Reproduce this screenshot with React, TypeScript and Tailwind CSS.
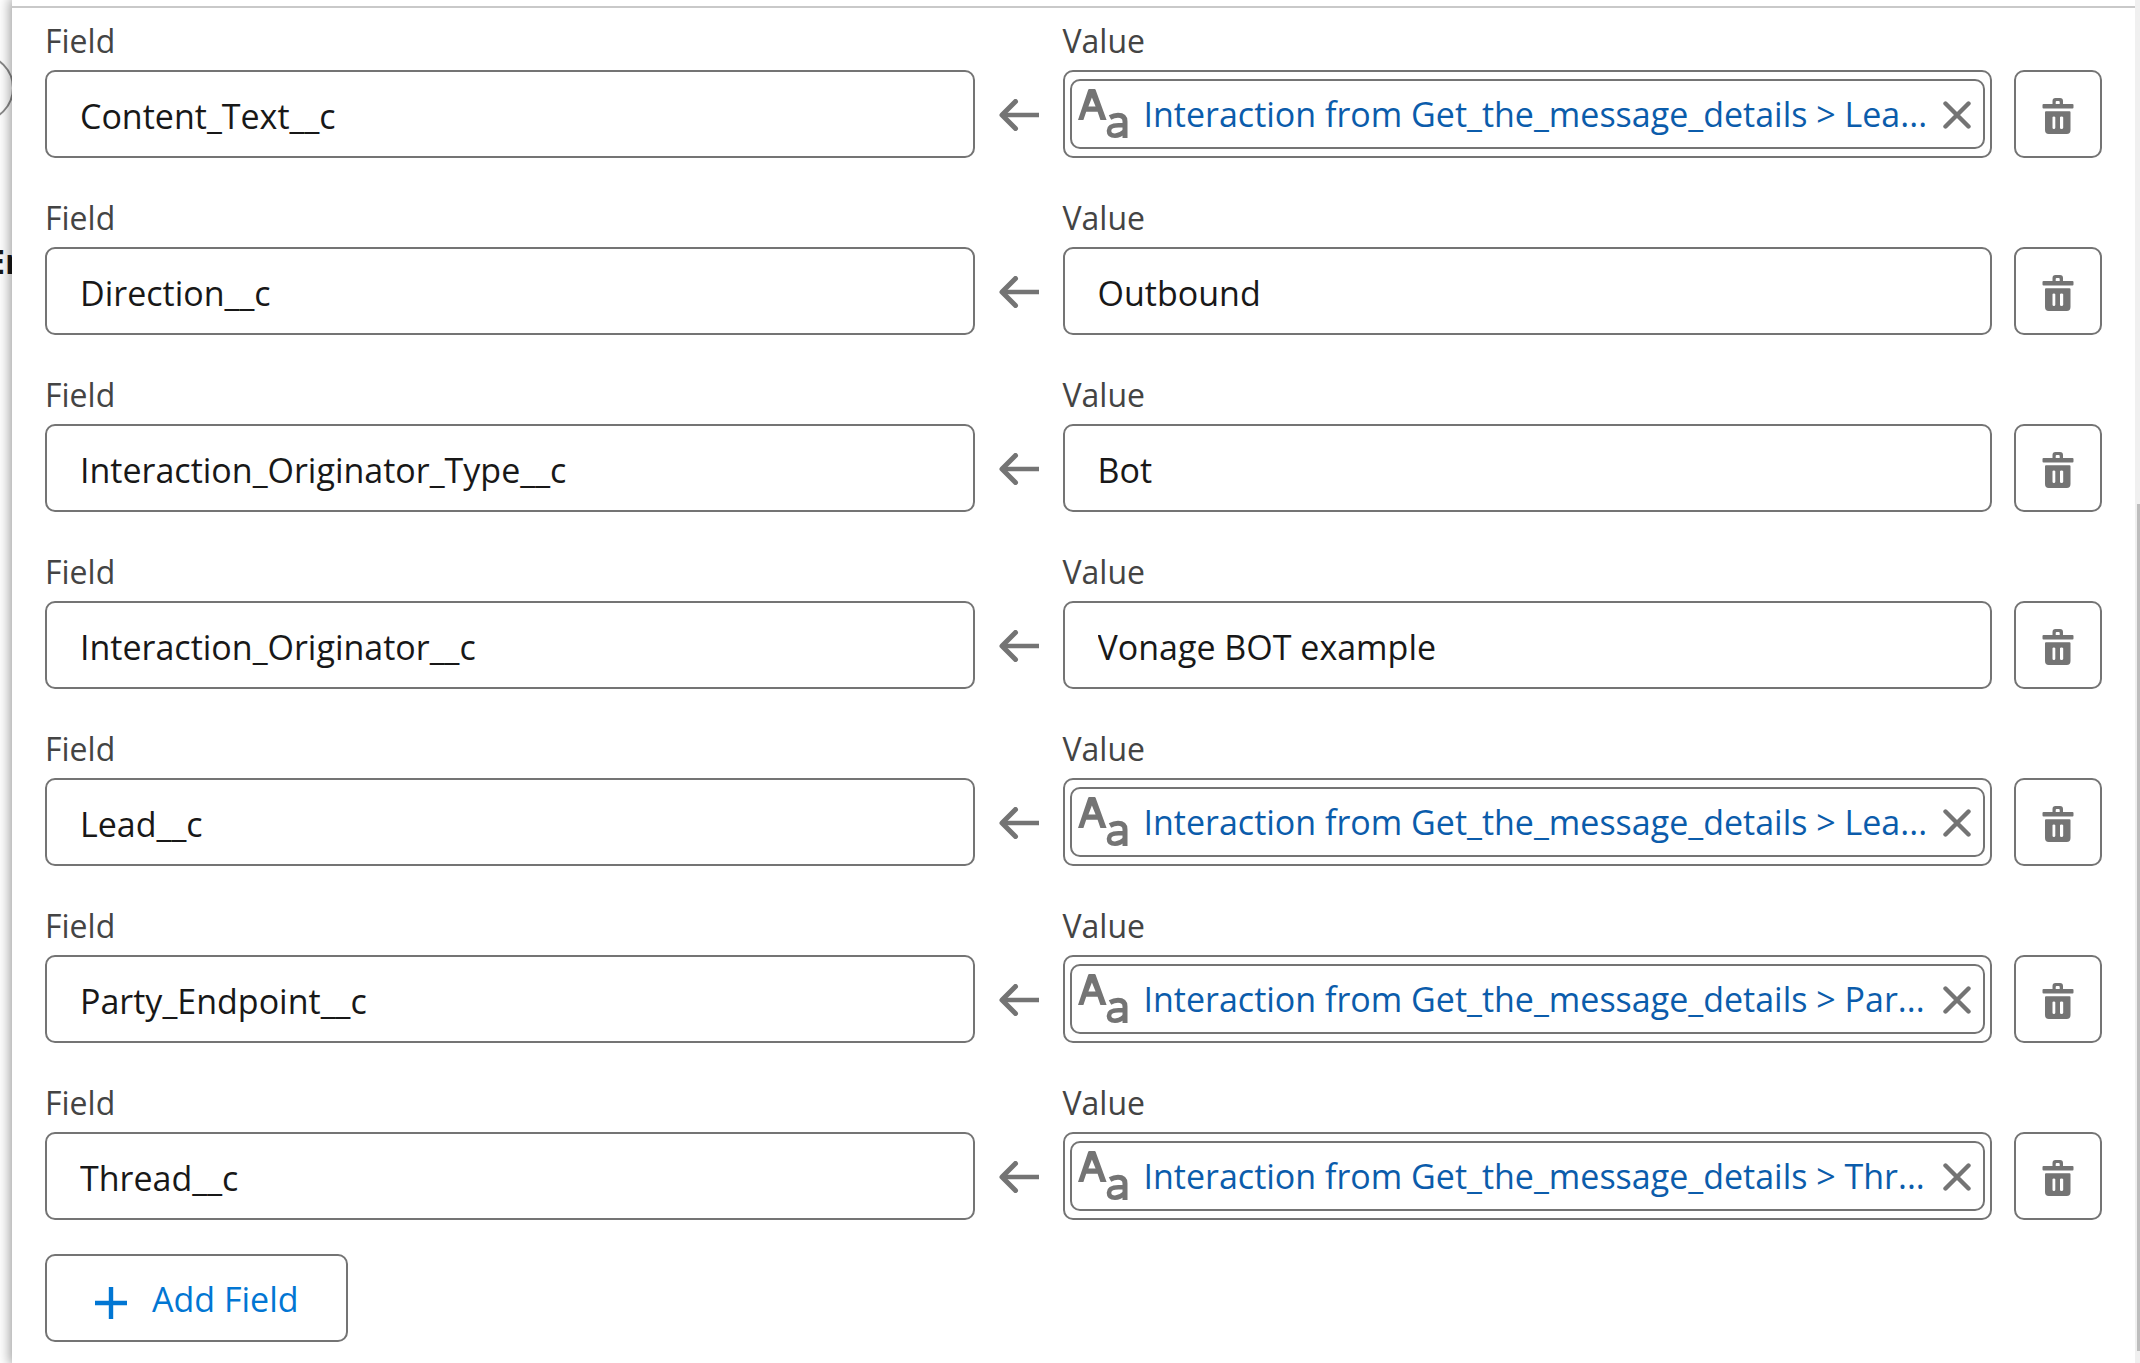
import React, { useId, useState } from "react";

type Row = { field: string; value: string; resource?: boolean };

const PREFIX = "Interaction from Get_the_message_details > ";

const initialRows: Row[] = [
  { field: "Content_Text__c", value: PREFIX + "Lea...", resource: true },
  { field: "Direction__c", value: "Outbound" },
  { field: "Interaction_Originator_Type__c", value: "Bot" },
  { field: "Interaction_Originator__c", value: "Vonage BOT example" },
  { field: "Lead__c", value: PREFIX + "Lea...", resource: true },
  { field: "Party_Endpoint__c", value: PREFIX + "Par...", resource: true },
  { field: "Thread__c", value: PREFIX + "Thr...", resource: true },
];

function ArrowLeft() {
  return (
    <svg width="40" height="32" viewBox="0 0 40 32" fill="none" stroke="#747474" aria-hidden="true">
      <path d="M4 16H40" strokeWidth="4.6" />
      <path d="M16.5 2.5L3 16L16.5 29.5" strokeWidth="5" strokeLinecap="round" strokeLinejoin="round" />
    </svg>
  );
}

function TextIcon() {
  return (
    <svg className="shrink-0" width="50" height="50" viewBox="0 0 50 50" fill="none" stroke="#747474" aria-hidden="true">
      <path
        fill="#747474"
        stroke="none"
        fillRule="evenodd"
        d="M11.2 0H16.6Q17.3 0 17.6 .8L28.6 31H22.4L19.6 22.8H8.2L5.4 31H0L10.2 .8Q10.5 0 11.2 0ZM13.9 8.6L10.4 17.4H17.6Z"
      />
      <path d="M32 28.5Q36 26.3 40 26.3Q47 26.3 47 32.5V49" strokeWidth="5" />
      <path d="M46.5 36.2H40.5Q31 36.2 31 41.7Q31 46.7 37 46.7Q42 46.7 46.5 42.5" strokeWidth="4.6" />
    </svg>
  );
}

function CloseIcon() {
  return (
    <svg width="28" height="28" viewBox="0 0 28 28" fill="none" stroke="#747474" strokeWidth="4.4" strokeLinecap="round" aria-hidden="true">
      <path d="M2.5 2.5L25.5 25.5M25.5 2.5L2.5 25.5" />
    </svg>
  );
}

function TrashIcon() {
  return (
    <svg width="32" height="36" viewBox="0 0 32 36" fill="#747474" aria-hidden="true">
      <path d="M10.5 7V3Q10.5 0 13.5 0H18Q21 0 21 3V7H17.7V4Q17.7 3 16.7 3H14.7Q13.7 3 13.7 4V7Z" />
      <rect x="0.5" y="6" width="31" height="4.4" rx="1" />
      <path
        fillRule="evenodd"
        d="M4 13.3H27.5Q28.5 13.3 28.5 14.3V32Q28.5 36 24.7 36H6.8Q3 36 3 32V14.3Q3 13.3 4 13.3ZM10.5 19.2V29.8Q10.5 31 11.9 31Q13.3 31 13.3 29.8V19.2Q13.3 18.4 11.9 18.4Q10.5 18.4 10.5 19.2ZM18 19.2V29.8Q18 31 19.4 31Q21.2 31 21.2 29.8V19.2Q21.2 18.4 19.4 18.4Q18 18.4 18 19.2Z"
      />
    </svg>
  );
}

function PlusIcon() {
  return (
    <svg width="34" height="34" viewBox="0 0 34 34" fill="none" stroke="#0176d3" strokeWidth="4.4" aria-hidden="true">
      <path d="M17 1V33M1 17H33" />
    </svg>
  );
}

const labelClass = "block text-[32px] leading-[42px] text-[#444444]";
const inputClass =
  "h-[88px] w-full rounded-[10px] border-2 border-[#747474] bg-white px-[33px] pt-1 text-[34px] text-[#181818] outline-none";

function AssignmentRow({ row, onClear, onDelete }: { row: Row; onClear: () => void; onDelete: () => void }) {
  const id = useId();
  return (
    <div className="flex items-end">
      <div className="flex min-w-0 flex-1 flex-col gap-2">
        <label htmlFor={id + "f"} className={labelClass}>Field</label>
        <input id={id + "f"} type="text" defaultValue={row.field} className={inputClass} />
      </div>
      <div className="flex h-[88px] w-[88px] shrink-0 items-center justify-center pt-[2px]">
        <ArrowLeft />
      </div>
      <div className="flex min-w-0 flex-1 flex-col gap-2">
        <label htmlFor={id + "v"} className={labelClass}>Value</label>
        {row.resource ? (
          <div className="flex h-[88px] items-center rounded-[10px] border-2 border-[#747474] px-[5px]">
            <div className="flex h-[70px] w-full items-center rounded-[10px] border-2 border-[#747474] pr-3 pl-[6px]">
              <TextIcon />
              <button id={id + "v"} type="button" className="ml-4 min-w-0 flex-1 truncate text-left text-[34px] leading-[50px] text-[#0b5cab]">
                {row.value}
              </button>
              <button type="button" aria-label="Clear value" onClick={onClear} className="shrink-0 pt-[2px]">
                <CloseIcon />
              </button>
            </div>
          </div>
        ) : (
          <input id={id + "v"} type="text" defaultValue={row.value} className={inputClass} />
        )}
      </div>
      <button
        type="button"
        aria-label="Delete field"
        onClick={onDelete}
        className="ml-[22px] flex h-[88px] w-[88px] shrink-0 items-center justify-center rounded-[10px] border-2 border-[#747474] pt-1"
      >
        <TrashIcon />
      </button>
    </div>
  );
}

export default function App() {
  const [rows, setRows] = useState(initialRows);
  return (
    <div className="flex min-h-screen overflow-hidden bg-white font-['Open_Sans','Noto_Sans',sans-serif]">
      <div className="relative w-3 shrink-0 overflow-hidden">
        <div className="absolute top-[54px] -left-[54px] h-[68px] w-[68px] rounded-full border-2 border-[#8a8a8a]" />
        <span className="absolute top-[238px] -left-[14px] text-[34px] leading-[46px] font-bold text-[#181818]">En</span>
      </div>
      <main className="relative min-w-0 flex-1 bg-white shadow-[0_0_12px_2px_rgba(0,0,0,0.4)]">
        <div className="mt-[6px] border-t-2 border-[#c9c9c9] px-[33px] pt-3">
          <div className="flex flex-col gap-[39px]">
            {rows.map((row, i) => (
              <AssignmentRow
                key={row.field}
                row={row}
                onClear={() => setRows(rows.map((r, j) => (j === i ? { field: r.field, value: "" } : r)))}
                onDelete={() => setRows(rows.filter((_, j) => j !== i))}
              />
            ))}
          </div>
          <button
            type="button"
            onClick={() => setRows([...rows, { field: "", value: "" }])}
            className="mt-[34px] flex h-[88px] items-center gap-6 rounded-[10px] border-2 border-[#747474] px-[47px] pt-[2px] text-[34px] text-[#0176d3]"
          >
            <span className="pt-2">
              <PlusIcon />
            </span>
            Add Field
          </button>
        </div>
      </main>
      <div className="relative flex w-[5px] shrink-0 flex-col bg-[#f0f0f0] pl-[2px]">
        <div className="mt-[504px] mb-3 flex-1 bg-[#bdbdbd]" />
      </div>
    </div>
  );
}
